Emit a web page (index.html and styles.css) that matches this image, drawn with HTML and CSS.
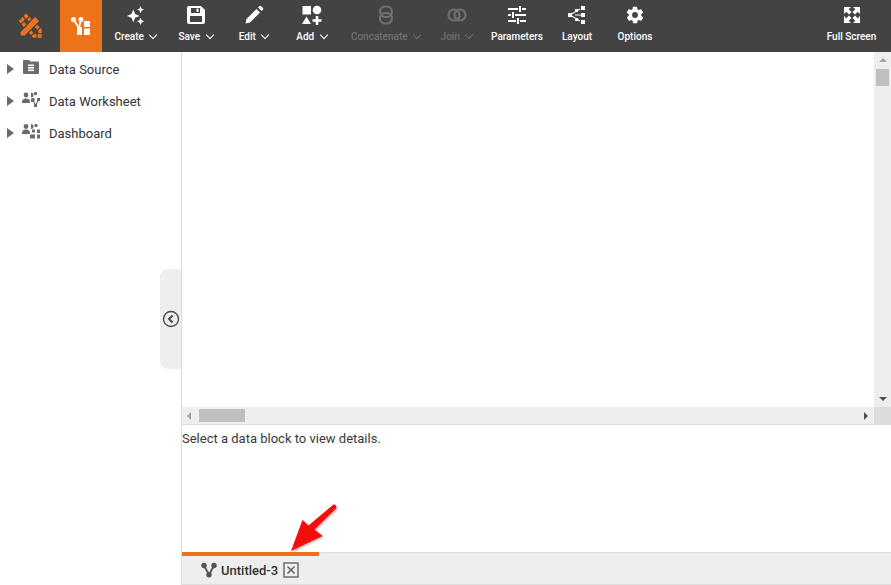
FILE: index.html
```html
<!DOCTYPE html>
<html lang="en">
<head>
  <meta charset="UTF-8" />
  <title>Data Worksheet</title>
  <link rel="stylesheet" href="styles.css">
</head>
<body>

<div class="toolbar">
  <div class="logo">
    <svg width="26" height="26" viewBox="0 0 26 26">
      <path d="M4 8 9 3l14 14v6h-6z" fill="none" stroke="#ee7219" stroke-width="3.4" stroke-dasharray="4 1.2"/>
      <path d="M3 19 18 3l5 5L8 23H3z" fill="#ee7219" stroke="#434343" stroke-width="1.2"/>
    </svg>
  </div>
  <div class="home">
    <svg width="22" height="22" viewBox="0 0 22 22" fill="#fff">
      <circle cx="3.5" cy="4.5" r="2.5"/><circle cx="11" cy="4.5" r="2.5"/>
      <path d="M3.5 4.5 9 13M11 4.5 9 13" stroke="#fff" stroke-width="1.8"/>
      <rect x="7" y="12" width="5" height="8"/>
      <rect x="14" y="6" width="6" height="6"/><rect x="14" y="13.5" width="6" height="6.5"/>
    </svg>
  </div>

  <div class="tool tool-create">
    <svg width="22" height="22" viewBox="0 0 22 22" fill="#fff">
      <path d="M8 5 10 10 15 12 10 14 8 19 6 14 1 12 6 10z"/>
      <path d="M16 1 17.2 4 20 5 17.2 6 16 9 14.8 6 12 5 14.8 4z"/>
      <path d="M16 14 17.2 16.8 20 18 17.2 19.2 16 22 14.8 19.2 12 18 14.8 16.8z"/>
    </svg>
    <span class="label">Create <i class="chev"></i></span>
  </div>
  <div class="tool tool-save">
    <svg width="20" height="20" viewBox="0 0 20 20">
      <path d="M3 1h12l4 4v12a2 2 0 0 1-2 2H3a2 2 0 0 1-2-2V3a2 2 0 0 1 2-2z" fill="#fff"/>
      <rect x="5" y="3" width="9" height="5" fill="#434343"/>
      <rect x="10.5" y="3.6" width="2" height="3.4" fill="#fff"/>
      <rect x="4" y="11" width="12" height="6" fill="#434343"/>
    </svg>
    <span class="label">Save <i class="chev"></i></span>
  </div>
  <div class="tool tool-edit">
    <svg width="20" height="20" viewBox="0 0 20 20" fill="#fff">
      <path d="M1.5 18.5 2.5 14 12.5 4 16 7.500 6 17.500z"/>
      <path d="M14 2.500 15.500 1a1 1 0 0 1 1.400 0L19 3.100a1 1 0 0 1 0 1.400L17.500 6z"/>
    </svg>
    <span class="label">Edit <i class="chev"></i></span>
  </div>
  <div class="tool tool-add">
    <svg width="20" height="20" viewBox="0 0 20 20" fill="#fff">
      <rect x="0.500" y="1" width="8.500" height="8.500"/>
      <circle cx="15" cy="5" r="4.300"/>
      <path d="M4.500 11.500 9 19H0z"/>
      <path d="M13.700 11h2.600v3.200h3.200v2.600h-3.200V20h-2.600v-3.200h-3.200v-2.600h3.200z"/>
    </svg>
    <span class="label">Add <i class="chev"></i></span>
  </div>
  <div class="tool tool-concat off">
    <svg width="20" height="20" viewBox="0 0 20 20" fill="none" stroke="#6f6f6f" stroke-width="2.200">
      <rect x="4" y="1.500" width="12" height="10.500" rx="5.200"/>
      <rect x="4" y="8" width="12" height="10.500" rx="5.200"/>
    </svg>
    <span class="label">Concatenate <i class="chev"></i></span>
  </div>
  <div class="tool tool-join off">
    <svg width="20" height="20" viewBox="0 0 20 20" fill="none" stroke="#6f6f6f" stroke-width="2.200">
      <circle cx="7" cy="10" r="5.500"/><circle cx="13" cy="10" r="5.500"/>
    </svg>
    <span class="label">Join <i class="chev"></i></span>
  </div>
  <div class="tool tool-params">
    <svg width="20" height="20" viewBox="0 0 20 20" fill="#fff">
      <rect x="1" y="3" width="10" height="2"/><rect x="12" y="1" width="2" height="6"/><rect x="15" y="3" width="4" height="2"/>
      <rect x="1" y="9" width="3" height="2"/><rect x="5" y="7" width="2" height="6"/><rect x="8" y="9" width="11" height="2"/>
      <rect x="1" y="15" width="8" height="2"/><rect x="10" y="13" width="2" height="6"/><rect x="13" y="15" width="6" height="2"/>
    </svg>
    <span class="label">Parameters</span>
  </div>
  <div class="tool tool-layout">
    <svg width="20" height="20" viewBox="0 0 20 20" fill="#fff">
      <path d="M3 10 13 4M3 10 13 16M8 10h6" stroke="#fff" stroke-width="1.200" fill="none"/>
      <rect x="1" y="8" width="4" height="4"/>
      <rect x="14" y="1" width="4" height="4"/><rect x="14" y="8" width="4" height="4"/><rect x="14" y="15" width="4" height="4"/>
      <rect x="8" y="4" width="3" height="3"/><rect x="8" y="13" width="3" height="3"/>
    </svg>
    <span class="label">Layout</span>
  </div>
  <div class="tool tool-options">
    <svg width="20" height="20" viewBox="0 0 24 24" fill="#fff">
      <path fill-rule="evenodd" d="M19.400 13c.1-.3.100-.7.100-1s0-.7-.1-1l2.100-1.600c.2-.2.200-.4.100-.6l-2-3.500c-.1-.2-.4-.3-.6-.2l-2.500 1c-.5-.4-1.100-.7-1.700-1l-.4-2.700c0-.2-.2-.4-.5-.4h-4c-.2 0-.4.200-.5.400l-.4 2.700c-.6.300-1.200.6-1.700 1l-2.500-1c-.2-.1-.5 0-.6.200l-2 3.500c-.1.200-.1.500.1.600L4.600 11c-.1.300-.1.700-.1 1s0 .7.100 1l-2.100 1.600c-.2.200-.2.400-.1.600l2 3.500c.1.200.4.300.6.200l2.500-1c.5.400 1.100.7 1.700 1l.4 2.700c0 .2.200.4.500.4h4c.2 0 .4-.2.500-.4l.4-2.700c.6-.3 1.200-.6 1.700-1l2.500 1c.2.100.5 0 .6-.2l2-3.500c.1-.2.100-.5-.1-.6zM12 15.500a3.500 3.500 0 1 1 0-7 3.500 3.500 0 0 1 0 7z"/>
    </svg>
    <span class="label">Options</span>
  </div>
  <div class="tool tool-full">
    <svg width="20" height="20" viewBox="0 0 20 20" fill="#fff">
      <path d="M2 2h7L6.700 4.300 9.500 7 7 9.500 4.300 6.700 2 9z"/>
      <path d="M18 2h-7l2.300 2.300L10.500 7 13 9.500l2.700-2.800L18 9z"/>
      <path d="M2 18h7l-2.300-2.300 2.800-2.700L7 10.500l-2.700 2.800L2 11z"/>
      <path d="M18 18h-7l2.300-2.300-2.800-2.700 2.500-2.500 2.700 2.800L18 11z"/>
    </svg>
    <span class="label">Full Screen</span>
  </div>
</div>

<div class="content">
  <div class="sidebar">
    <div class="tree-row">
      <i class="caret"></i>
      <svg class="tree-icon" width="18" height="16" viewBox="0 0 18 16">
        <path d="M1 2a1 1 0 0 1 1-1h5l1.500 1.500H16a1 1 0 0 1 1 1V14a1 1 0 0 1-1 1H2a1 1 0 0 1-1-1z" fill="#6b6b6b"/>
        <rect x="6" y="5.500" width="6" height="1.600" fill="#fff"/><rect x="6" y="8" width="6" height="1.600" fill="#fff"/><rect x="6" y="10.500" width="6" height="1.600" fill="#fff"/>
      </svg>
      <span>Data Source</span>
    </div>
    <div class="tree-row">
      <i class="caret"></i>
      <svg class="tree-icon" width="18" height="16" viewBox="0 0 18 16" fill="#6b6b6b">
        <circle cx="4" cy="4" r="2.400"/><path d="M0 11a4 3.500 0 0 1 8 0v1H0z"/>
        <path d="M9 1.500a2.500 2.500 0 0 1 0 5zM9 8l3 0v3H9z"/>
        <circle cx="13.500" cy="2.500" r="1.700"/>
        <rect x="9.500" y="7" width="3" height="3"/><rect x="15" y="7" width="3" height="3"/><rect x="12" y="13" width="3" height="3"/>
        <path d="M11 9 13.500 14.500 16.500 9" fill="none" stroke="#6b6b6b" stroke-width="1.200"/>
      </svg>
      <span>Data Worksheet</span>
    </div>
    <div class="tree-row">
      <i class="caret"></i>
      <svg class="tree-icon" width="18" height="16" viewBox="0 0 18 16" fill="#6b6b6b">
        <circle cx="4" cy="3.500" r="2.400"/><path d="M0 10a4 3.500 0 0 1 8 0v1H0z"/>
        <path d="M9 1a2.500 2.500 0 0 1 0 5z"/><circle cx="14" cy="2.500" r="1.700"/>
        <rect x="10" y="6.500" width="3" height="3"/><rect x="15" y="6.500" width="3" height="3.500"/>
        <rect x="8" y="11.500" width="5" height="4"/><rect x="15" y="11.500" width="3" height="4"/>
      </svg>
      <span>Dashboard</span>
    </div>
    <div class="collapse">
      <svg width="18" height="18" viewBox="0 0 18 18" fill="none" stroke="#4a4a4a">
        <circle cx="9" cy="9" r="7.500" stroke-width="1.400"/>
        <path d="M10.500 5.500 7 9l3.500 3.500" stroke-width="2"/>
      </svg>
    </div>
  </div>

  <div class="main">
    <div class="canvas">
      <div class="canvas-view"></div>
      <div class="vscroll">
        <i class="arrow-up"></i>
        <i class="vthumb"></i>
        <i class="arrow-down"></i>
      </div>
    </div>
    <div class="hscroll">
      <i class="arrow-left"></i>
      <i class="hthumb"></i>
      <i class="arrow-right"></i>
      <i class="corner"></i>
    </div>
    <div class="details">Select a data block to view details.</div>
    <div class="tabs">
      <div class="tab">
        <svg width="16" height="16" viewBox="0 0 16 16" fill="#555">
          <circle cx="3" cy="3.500" r="2.700"/><circle cx="13" cy="3.500" r="2.700"/><circle cx="8" cy="12.800" r="2.700"/>
          <path d="M3 3.500 8 12.800 13 3.500" fill="none" stroke="#555" stroke-width="1.800"/>
        </svg>
        <span class="tab-name">Untitled-3</span>
        <svg width="16" height="16" viewBox="0 0 16 16" fill="none" stroke="#666">
          <rect x="1" y="1" width="14" height="14" stroke-width="1.400"/>
          <path d="M4.500 4.500l7 7M11.500 4.500l-7 7" stroke-width="1.600"/>
        </svg>
      </div>
    </div>
  </div>
</div>

<svg class="pointer" width="60" height="60" viewBox="0 0 60 60">
  <defs>
    <filter id="soft" x="-20%" y="-20%" width="150%" height="150%">
      <feDropShadow dx="1" dy="1" stdDeviation="1.200" flood-color="#000" flood-opacity="0.35"/>
    </filter>
  </defs>
  <path d="M47 6.500 25.500 27.500 33.500 34 2 49 13.500 18 19.500 23.500 44.500 2.500a2.700 2.700 0 0 1 2.500 4z" fill="#f40c0c" filter="url(#soft)"/>
</svg>

</body>
</html>
```

FILE: styles.css
```css
* {
  box-sizing: border-box;
}
html, body {
  height: 100%;
}
body {
  margin: 0;
  font-family: Roboto, Arial, sans-serif;
  font-size: 13px;
  color: #2c2c2c;
  background: #fff;
  overflow: hidden;
  position: relative;
  display: flex;
  flex-direction: column;
}

/* top bar */
.toolbar {
  height: 52px;
  flex: none;
  display: flex;
  background: #434343;
}
.logo {
  width: 60px;
  display: flex;
  align-items: center;
  justify-content: center;
}
.home {
  width: 42px;
  background: #ee7219;
  display: flex;
  align-items: center;
  justify-content: center;
}
.tool {
  display: flex;
  flex-direction: column;
  align-items: center;
  padding-top: 5px;
  color: #fff;
  font-size: 10px;
  font-weight: 500;
}
.tool svg {
  height: 20px;
}
.label {
  margin-top: 6px;
  white-space: nowrap;
  line-height: 12px;
}
.off {
  color: #6f6f6f;
}
.chev {
  display: inline-block;
  width: 6px;
  height: 6px;
  margin: 0 1px 2px 4px;
  border-right: 1.5px solid currentColor;
  border-bottom: 1.5px solid currentColor;
  transform: rotate(45deg);
}
.tool-create { width: 68px; }
.tool-save { width: 52px; }
.tool-edit { width: 52px; margin-left: 6px; }
.tool-add { width: 52px; margin-left: 6px; }
.tool-concat { width: 92px; margin-left: 2px; }
.tool-join { width: 50px; }
.tool-params { width: 70px; }
.tool-layout { width: 50px; }
.tool-options { width: 66px; }
.tool-full { width: 71px; margin-left: auto; margin-right: 4px; }

/* body */
.content {
  flex: 1;
  display: flex;
  min-height: 0;
}
.sidebar {
  width: 182px;
  flex: none;
  border-right: 1px solid #ddd;
  padding-top: 1px;
  position: relative;
}
.tree-row {
  height: 32px;
  display: flex;
  align-items: center;
  padding-left: 7px;
  color: #333;
}
.caret {
  width: 0;
  height: 0;
  border-left: 7px solid #6b6b6b;
  border-top: 5px solid transparent;
  border-bottom: 5px solid transparent;
  margin-right: 8px;
}
.tree-icon {
  margin-right: 9px;
  margin-top: -4px;
}
.collapse {
  position: absolute;
  right: 0;
  top: 217px;
  width: 21px;
  height: 100px;
  background: #eee;
  border-radius: 8px 0 0 8px;
  display: flex;
  align-items: center;
  justify-content: center;
}

.main {
  flex: 1;
  min-width: 0;
  display: flex;
  flex-direction: column;
}
.canvas {
  height: 355px;
  flex: none;
  display: flex;
}
.canvas-view {
  flex: 1;
}
.vscroll {
  width: 17px;
  background: #eee;
  display: flex;
  flex-direction: column;
  align-items: center;
  padding-top: 6px;
}
.arrow-up {
  border-left: 4px solid transparent;
  border-right: 4px solid transparent;
  border-bottom: 4px solid #a5a5a5;
}
.vthumb {
  width: 13px;
  height: 17px;
  margin-top: 7px;
  background: #bfbfbf;
}
.arrow-down {
  margin-top: auto;
  margin-bottom: 6px;
  border-left: 4px solid transparent;
  border-right: 4px solid transparent;
  border-top: 4px solid #505050;
}
.hscroll {
  height: 18px;
  flex: none;
  background: #eee;
  border-bottom: 1px solid #ddd;
  display: flex;
  align-items: center;
  padding-left: 5px;
}
.arrow-left {
  border-top: 4px solid transparent;
  border-bottom: 4px solid transparent;
  border-right: 4px solid #a5a5a5;
}
.hthumb {
  width: 46px;
  height: 13px;
  margin-left: 8px;
  background: #bfbfbf;
}
.arrow-right {
  margin-left: auto;
  margin-right: 6px;
  border-top: 4px solid transparent;
  border-bottom: 4px solid transparent;
  border-left: 4px solid #505050;
}
.corner {
  width: 17px;
  height: 17px;
  background: #dcdcdc;
}
.details {
  flex: 1;
  padding-top: 6px;
  line-height: 15px;
  color: #3a3a3a;
}
.tabs {
  height: 33px;
  flex: none;
  background: #eee;
  border-top: 1px solid #ddd;
  border-bottom: 1px solid #ddd;
}
.tab {
  width: 137px;
  height: 32px;
  margin-top: -1px;
  border-top: 4px solid #ee7219;
  display: flex;
  align-items: center;
  padding-left: 19px;
}
.tab-name {
  font-weight: 500;
  color: #333;
  margin: 0 5px 0 4px;
}

/* red callout arrow drawn over the tab */
.pointer {
  position: absolute;
  left: 289px;
  top: 502px;
}
```
